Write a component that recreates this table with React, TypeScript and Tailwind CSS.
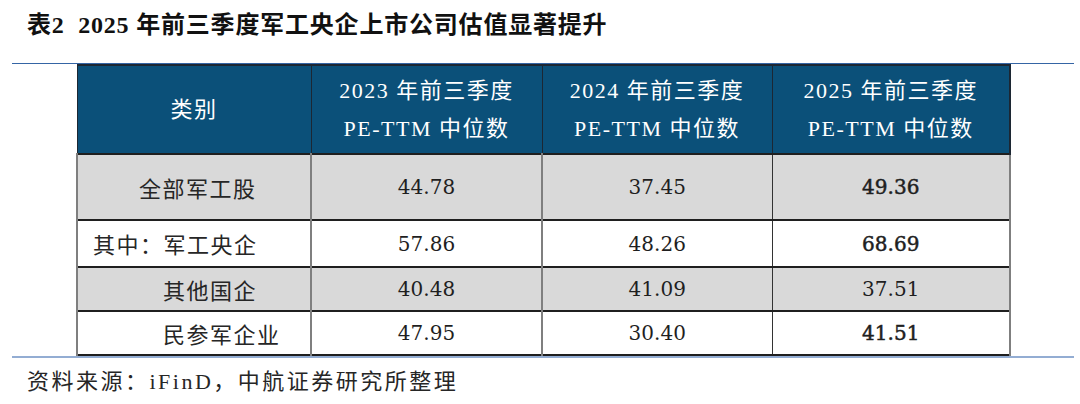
import React from 'react';

type Row = {
  label: string;
  pad: string;
  bg: string;
  h: string;
  values: [string, string, string];
  strong: boolean;
};

const rows: Row[] = [
  { label: '全部军工股', pad: 'pl-[61px]', bg: 'bg-[#d9d9d9]', h: 'h-[66px]', values: ['44.78', '37.45', '49.36'], strong: true },
  { label: '其中：军工央企', pad: 'pl-[15px]', bg: 'bg-white', h: 'h-[47px]', values: ['57.86', '48.26', '68.69'], strong: true },
  { label: '其他国企', pad: 'pl-[85px]', bg: 'bg-[#d9d9d9]', h: 'h-[44px]', values: ['40.48', '41.09', '37.51'], strong: false },
  { label: '民参军企业', pad: 'pl-[85px]', bg: 'bg-white', h: 'h-[44px]', values: ['47.95', '30.40', '41.51'], strong: true },
];

const years = ['2023', '2024', '2025'];

export default function App() {
  return (
    <div className="w-[1080px] h-[404px] bg-white px-[12px] pt-[12px] overflow-hidden">
      {/* title */}
      <h1 className="pl-[15px] h-[51px] leading-[26px] text-[24px] tracking-[0.8px] font-bold text-[#111] [font-family:'Liberation_Serif','Noto_Sans_CJK_SC',serif]">
        表2&nbsp;&nbsp;2025 年前三季度军工央企上市公司估值显著提升
      </h1>

      <div className="w-[1062px] border-t border-[#3565a5]">
        <table className="ml-[64px] w-[933px] table-fixed border-collapse">
          <colgroup>
            <col className="w-[234px]" />
            <col className="w-[231px]" />
            <col className="w-[230px]" />
            <col className="w-[238px]" />
          </colgroup>
          <thead>
            <tr className="h-[89px] bg-[#0b5079] text-white text-[22px] [font-family:'Liberation_Serif','Noto_Sans_CJK_SC',serif]">
              <th className="border-t-2 border-l border-r border-[#1c2733] font-normal text-center tracking-[1.5px]">类别</th>
              {years.map((y, i) => (
                <th
                  key={y}
                  className={`border-t-2 border-[#1c2733] font-normal text-center leading-[38px] tracking-[1.5px] ${i === 2 ? 'border-r-2' : 'border-r'}`}
                >
                  <div>{y} 年前三季度</div>
                  <div>PE-TTM 中位数</div>
                </th>
              ))}
            </tr>
          </thead>
          <tbody>
            {rows.map((r) => (
              <tr key={r.label} className={`${r.bg} ${r.h} border-t-2 border-[#1f1f1f]`}>
                <td className={`${r.pad} border-l-2 border-r-2 border-l-[#7f7f7f] border-r-[#7f7f7f] text-[22px] tracking-[1.5px] text-[#262626] [font-family:'Noto_Sans_CJK_SC',sans-serif]`}>
                  {r.label}
                </td>
                {r.values.map((v, i) => (
                  <td
                    key={i}
                    className={`text-center text-[20px] text-[#1f1f1f] [font-family:'DejaVu_Serif',serif] ${
                      i === 1 ? 'border-r border-r-[#333]' : 'border-r-2 border-r-[#7f7f7f]'
                    } ${i === 2 && r.strong ? '[-webkit-text-stroke:0.5px_#1f1f1f]' : ''}`}
                  >
                    {v}
                  </td>
                ))}
              </tr>
            ))}
            <tr className="h-0 border-t-2 border-[#1f1f1f]">
              <td colSpan={4} className="p-0" />
            </tr>
          </tbody>
        </table>
      </div>
      <div className="w-[1062px] h-[2px] bg-[#93add3]" />

      {/* source note */}
      <p className="pl-[15px] pt-[10px] leading-[28px] text-[22px] tracking-[2.5px] text-[#262626] [font-family:'Liberation_Serif','Noto_Sans_CJK_SC',serif]">
        资料来源：iFinD，中航证券研究所整理
      </p>
    </div>
  );
}
